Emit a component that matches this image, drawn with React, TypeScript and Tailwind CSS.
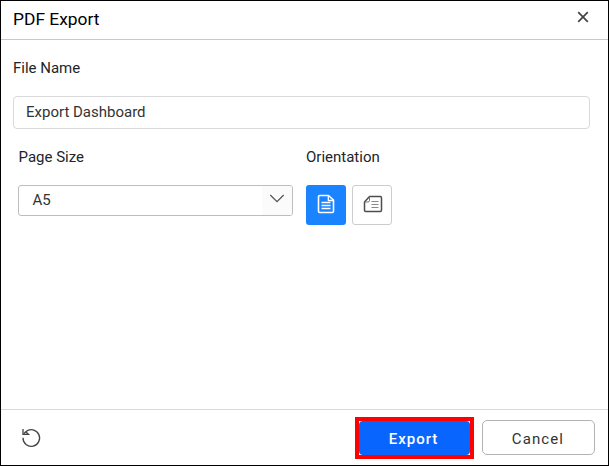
import React from "react";

function PortraitIcon() {
  return (
    <svg width="18" height="20" viewBox="0 0 18 20" fill="none" stroke="white" strokeWidth="1.6" strokeLinejoin="round">
      <path d="M2.8 1.5H11.5L16.5 6.2V17.3Q16.5 18.5 15.3 18.5H2.7Q1.5 18.5 1.5 17.3V2.7Q1.5 1.5 2.8 1.5Z" />
      <path d="M11.3 1.7V6.5H16.3" strokeWidth="1.3" />
      <path d="M4.5 8.5H13.5M4.5 11.5H13.5M4.5 14.5H13.5" strokeWidth="1.3" />
    </svg>
  );
}

function LandscapeIcon() {
  return (
    <svg width="20" height="18" viewBox="0 0 20 18" fill="none" stroke="#4d4d4d" strokeWidth="1.5" strokeLinejoin="round">
      <path d="M6.5 1.5H17.3Q18.5 1.5 18.5 2.7V15.3Q18.5 16.5 17.3 16.5H2.7Q1.5 16.5 1.5 15.3V7Z" />
      <path d="M6.5 1.7V5.5Q6.5 7 5 7H1.7" stroke="#777" strokeWidth="1" />
      <path d="M8.5 6.5H15.5M8.5 9.5H15.5M8.5 12.5H15.5" stroke="#8a8a8a" strokeWidth="1.1" />
    </svg>
  );
}

export default function App() {
  return (
    <div className="flex h-[466px] w-[609px] flex-col border border-black bg-white font-[Roboto,sans-serif] text-[15px] leading-5 text-[#212529]">
      <header className="flex h-[39px] shrink-0 items-center justify-between border-b border-[#c8c8c8] pr-[19px] pl-3">
        <h1 className="pb-0.5 text-[17.4px] leading-5 text-black">PDF Export</h1>
        <button aria-label="Close" className="-mt-[7px]">
          <svg width="12" height="12" viewBox="0 0 12 12" stroke="#444" strokeWidth="1.7">
            <path d="M1.2 1.2L10.8 10.8M10.8 1.2L1.2 10.8" />
          </svg>
        </button>
      </header>
      <main className="flex grow flex-col pt-[18px] pr-[18px] pl-3">
        <label>File Name</label>
        <div className="mt-[18px] flex h-[33px] shrink-0 items-center rounded-[4px] border border-[#d9d9d9] pb-0.5 pl-3 text-[#333]">
          Export Dashboard
        </div>
        <div className="mt-[18px] flex gap-[13px] pl-[5px]">
          <div className="w-[275px]">
            <label className="block pl-[0.5px]">Page Size</label>
            <div className="mt-[18px] flex h-[31px] overflow-hidden rounded-[3px] border border-[#bdbdbd]">
              <span className="grow pt-1 pl-[13.5px] text-[#333]">A5</span>
              <span className="flex w-[30px] items-center justify-center bg-[#fbfbfb] pr-px pb-[5px]">
                <svg width="16" height="9" viewBox="0 0 16 9" fill="none" stroke="#555" strokeWidth="1.3">
                  <path d="M1.3 1L8 7.6L14.7 1" />
                </svg>
              </span>
            </div>
          </div>
          <div>
            <label className="block">Orientation</label>
            <div className="mt-[18px] flex gap-1.5">
              <button className="flex size-10 items-center justify-center rounded-[3px] bg-[#1a83ff] pb-0.5">
                <PortraitIcon />
              </button>
              <button className="flex size-10 items-center justify-center rounded-[3px] border border-[#ccc] pb-0.5 pl-px">
                <LandscapeIcon />
              </button>
            </div>
          </div>
        </div>
      </main>
      <footer className="flex h-14 shrink-0 items-center border-t border-[#d9d9d9] pr-[13px] pl-5">
        <button aria-label="Reset">
          <svg width="22" height="20" viewBox="0 0 22 20" fill="none" stroke="#444" strokeWidth="1.3">
            <path d="M2 9.8A8.3 8.3 0 1 0 5 3.6L2.8 5.8" />
            <path d="M2 1V6.4H7.5L5 4" strokeWidth="1.3" />
          </svg>
        </button>
        <div className="ml-auto flex items-center gap-2">
          <div className="h-[42px] w-[119px] border-4 border-[#ff0000] bg-white">
            <button className="h-[34px] w-[111px] rounded-[4px] bg-[#0866ff] pt-0.5 pr-0.5 font-medium tracking-[1px] text-white">Export</button>
          </div>
          <button className="h-[35px] w-[113px] rounded-[5px] border border-[#b3b3b3] pt-0.5 pr-px tracking-[1.1px] text-[#333]">Cancel</button>
        </div>
      </footer>
    </div>
  );
}
